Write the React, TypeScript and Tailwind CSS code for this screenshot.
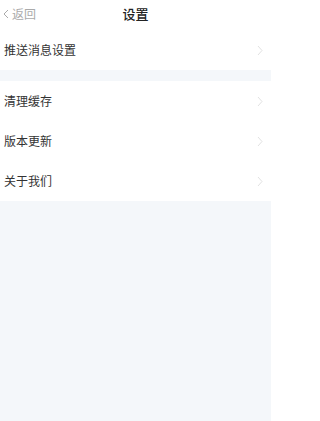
const font = { fontFamily: '"Noto Sans CJK SC", "Noto Sans", sans-serif' };

function Chevron() {
    return (
        <svg width="6" height="11" viewBox="0 0 6 11" fill="none">
            <path d="M1 1l4 4.5L1 10" stroke="#e2e2e2" strokeWidth="1" />
        </svg>
    );
}

function Row({ label }: { label: string }) {
    return (
        <div className="flex h-10 items-center justify-between bg-white pl-[4px] pr-[8px]">
            <span className="text-[12px] text-[#333]">{label}</span>
            <Chevron />
        </div>
    );
}

export default function App() {
    return (
        <div className="min-h-[421px] w-[271px] bg-[#f4f7fa]" style={font}>
            <div className="relative flex h-[28px] items-center justify-center bg-white">
                <div className="absolute left-[2px] top-0 flex h-full items-center gap-[2px] text-[12px] text-[#aaa]">
                    <svg width="8" height="10" viewBox="0 0 8 10" fill="none">
                        <path d="M6 1L2 5l4 4" stroke="#aaa" strokeWidth="1" />
                    </svg>
                    <span>返回</span>
                </div>
                <span className="text-[13px] font-medium text-[#222]">设置</span>
            </div>
            <div className="bg-white pt-[2px]">
                <Row label="推送消息设置" />
            </div>
            <div className="mt-[11px] bg-white">
                <Row label="清理缓存" />
                <Row label="版本更新" />
                <Row label="关于我们" />
            </div>
        </div>
    );
}
